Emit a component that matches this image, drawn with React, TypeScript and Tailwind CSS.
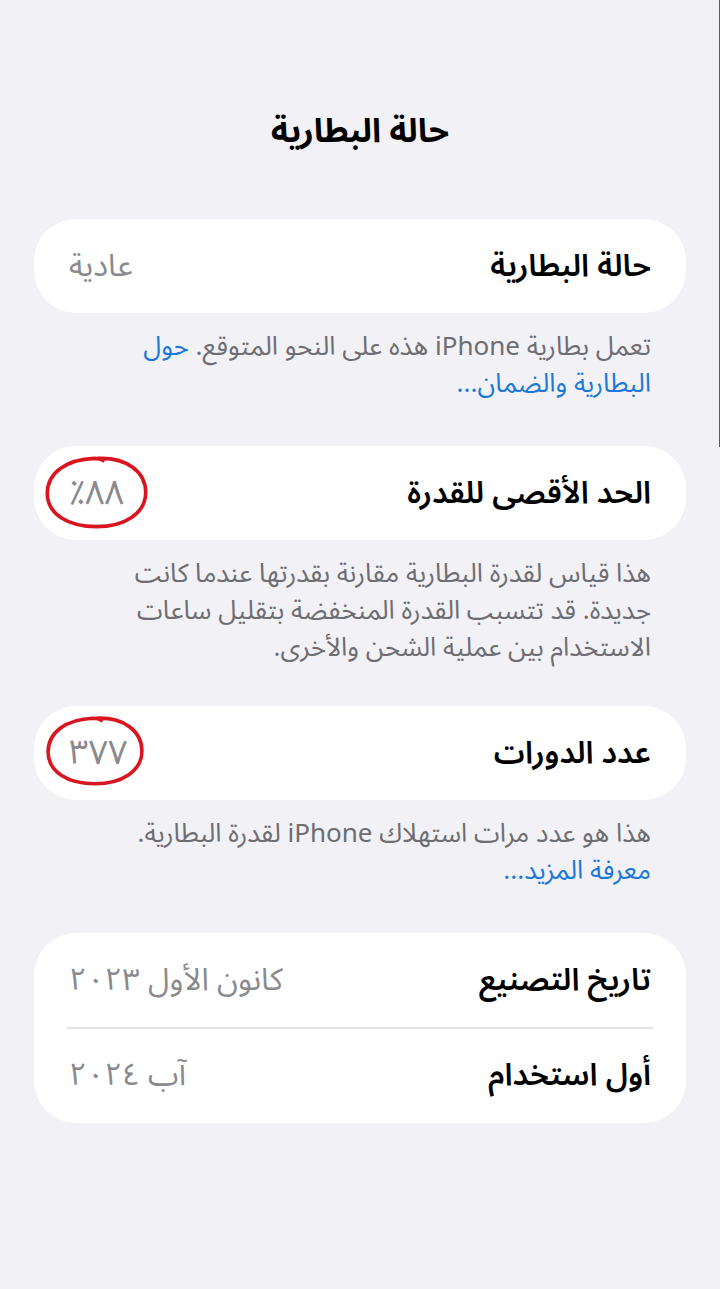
import React from 'react';

const font = { fontFamily: '"Noto Sans Arabic", "Noto Naskh Arabic", "DejaVu Sans", "Noto Sans", sans-serif' };

function RedRing({ className }: { className: string }) {
  return (
    <svg className={`pointer-events-none absolute ${className}`} viewBox="0 0 100 70" preserveAspectRatio="none">
      <path
        d="M52 4 C78 3 96 16 96 35 C96 54 76 66 50 66 C24 66 4 55 4 36 C4 17 22 5 48 4 C52 4 55 5 56 6"
        fill="none"
        stroke="#d9161f"
        strokeWidth="3.6"
        strokeLinecap="round"
        vectorEffect="non-scaling-stroke"
      />
    </svg>
  );
}

interface RowProps {
  label: string;
  value: string;
  ring?: string;
}

function Row({ label, value, ring }: RowProps) {
  return (
    <div className="relative flex h-[94px] items-center justify-between px-[35px]">
      <span className="text-[31px] font-semibold text-black">{label}</span>
      <span className={ring ? 'text-[34px] text-[#8a8a8e]' : 'text-[31px] text-[#8a8a8e]'}>{value}</span>
      {ring && <RedRing className={ring} />}
    </div>
  );
}

function Footer({ children }: { children: React.ReactNode }) {
  return <p className="px-[69px] pt-[15px] text-[26px] leading-[37px] text-[#6d6d72]">{children}</p>;
}

export default function App() {
  return (
    <div dir="rtl" style={font} className="relative min-h-[1289px] w-full bg-[#f1f1f6]">
      <div className="absolute right-0 top-0 h-[447px] w-[1.5px] bg-[#5a5a5e]" />

      <h1 className="pt-[112px] text-center text-[33px] font-bold leading-[40px] text-black">حالة البطارية</h1>

      <div className="px-[34px] pt-[67px]">
        <div className="rounded-[42px] bg-white">
          <Row label="حالة البطارية" value="عادية" />
        </div>
      </div>
      <Footer>
        تعمل بطارية iPhone هذه على النحو المتوقع. <span className="text-[#1c78d8]">حول</span>
        <br />
        <span className="text-[#1c78d8]">البطارية والضمان...</span>
      </Footer>

      <div className="px-[34px] pt-[44px]">
        <div className="rounded-[42px] bg-white">
          <Row label="الحد الأقصى للقدرة" value="٨٨٪" ring="left-[9px] top-[8px] h-[77px] w-[107px]" />
        </div>
      </div>
      <Footer>
        هذا قياس لقدرة البطارية مقارنة بقدرتها عندما كانت
        <br />
        جديدة. قد تتسبب القدرة المنخفضة بتقليل ساعات
        <br />
        الاستخدام بين عملية الشحن والأخرى.
      </Footer>

      <div className="px-[34px] pt-[40px]">
        <div className="rounded-[42px] bg-white">
          <Row label="عدد الدورات" value="٣٧٧" ring="left-[10px] top-[8px] h-[74px] w-[102px]" />
        </div>
      </div>
      <Footer>
        هذا هو عدد مرات استهلاك iPhone لقدرة البطارية.
        <br />
        <span className="text-[#1c78d8]">معرفة المزيد...</span>
      </Footer>

      <div className="px-[34px] pt-[44px]">
        <div className="rounded-[42px] bg-white">
          <Row label="تاريخ التصنيع" value="كانون الأول ٢٠٢٣" />
          <div className="mx-[33px] h-[1.5px] bg-[#e3e3e7]" />
          <Row label="أول استخدام" value="آب ٢٠٢٤" />
        </div>
      </div>
    </div>
  );
}
